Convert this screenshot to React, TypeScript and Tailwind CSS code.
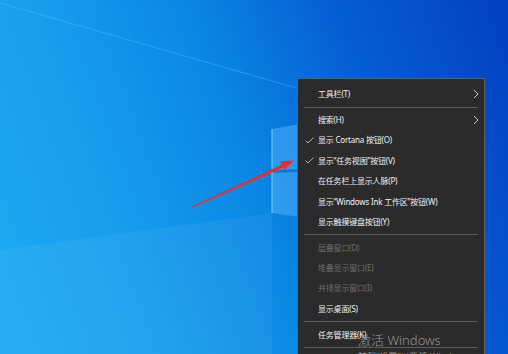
import React from 'react';

type Item =
  | { kind: 'row'; label: string; checked?: boolean; disabled?: boolean; submenu?: boolean }
  | { kind: 'sep' };

const items: Item[] = [
  { kind: 'row', label: '工具栏(T)', submenu: true },
  { kind: 'sep' },
  { kind: 'row', label: '搜索(H)', submenu: true },
  { kind: 'row', label: '显示 Cortana 按钮(O)', checked: true },
  { kind: 'row', label: '显示“任务视图”按钮(V)', checked: true },
  { kind: 'row', label: '在任务栏上显示人脉(P)' },
  { kind: 'row', label: '显示“Windows Ink 工作区”按钮(W)' },
  { kind: 'row', label: '显示触摸键盘按钮(Y)' },
  { kind: 'sep' },
  { kind: 'row', label: '层叠窗口(D)', disabled: true },
  { kind: 'row', label: '堆叠显示窗口(E)', disabled: true },
  { kind: 'row', label: '并排显示窗口(I)', disabled: true },
  { kind: 'row', label: '显示桌面(S)' },
  { kind: 'sep' },
  { kind: 'row', label: '任务管理器(K)' },
  { kind: 'sep' },
  { kind: 'row', label: '锁定所有任务栏(L)' },
];

function Check() {
  return (
    <svg width="9" height="7" viewBox="0 0 9 7" className="shrink-0">
      <path d="M0.5 3.6 L3 6 L8.5 0.6" fill="none" stroke="#bdbdbd" strokeWidth="0.9" />
    </svg>
  );
}

function Chevron() {
  return (
    <svg width="6" height="10" viewBox="0 0 6 10">
      <path d="M1 1 L5 5 L1 9" fill="none" stroke="#c9c9c9" strokeWidth="1" />
    </svg>
  );
}

function Wallpaper() {
  // wallpaper light beams + the windows logo pane peeking out from behind the menu
  return (
    <svg className="absolute inset-0" width="508" height="354" viewBox="0 0 508 354">
      <polygon points="0,250 272,213 272,354 0,354" fill="#ffffff" opacity="0.05" />
      <line x1="0" y1="3" x2="300" y2="89" stroke="#5cc4ff" strokeWidth="0.8" opacity="0.5" />
      <polygon points="272,129 300,124 300,169 272,170" fill="#5bbcff" opacity="0.45" />
      <polygon points="272,173 300,172 300,217 272,213" fill="#5bbcff" opacity="0.45" />
      <line x1="272" y1="129" x2="272" y2="213" stroke="#8be4ff" strokeWidth="1" opacity="0.8" />
      <line x1="272" y1="171.5" x2="300" y2="170.5" stroke="#1270d4" strokeWidth="1.5" opacity="0.7" />
    </svg>
  );
}

function Arrow() {
  return (
    <svg className="absolute inset-0 pointer-events-none" width="508" height="354" viewBox="0 0 508 354">
      <polygon points="191.5,206.6 192.5,207.6 283.6,167.2 282.4,164.2" fill="#e8302b" />
      <polygon points="294,160.5 280.1,161.2 284.3,169.8" fill="#e8302b" />
    </svg>
  );
}

export default function App() {
  return (
    <div
      className="relative w-[508px] h-[354px] overflow-hidden bg-[linear-gradient(250deg,#0340c2_0%,#065ed3_28%,#0a86e3_50%,#189fee_76%,#1eaaf3_100%)]"
      style={{ fontFamily: '"Noto Sans", "Noto Sans CJK SC", sans-serif' }}
    >
      <Wallpaper />
      <Arrow />

      <div className="absolute left-[297px] top-[78px] w-[188px] h-[290px] bg-[#2b2b2b] border border-[#616161] pt-[5px] text-[8px] leading-none">
        {items.map((it, i) =>
          it.kind === 'sep' ? (
            <div key={i} className="h-[5.4px] flex items-center px-[6px]">
              <div className="h-px w-full bg-[#5a5a5a]" />
            </div>
          ) : (
            <div key={i} className="h-[20.4px] flex items-center">
              <div className="w-[20px] flex justify-center pl-[2px]">{it.checked && <Check />}</div>
              <span className={`flex-1 tracking-[-0.2px] ${it.disabled ? 'text-[#6b6b6b]' : 'text-[#f2f2f2]'}`}>
                {it.label}
              </span>
              <div className="w-[14px] flex justify-center pr-[2px]">{it.submenu && <Chevron />}</div>
            </div>
          )
        )}
      </div>

      <div className="absolute left-[358px] top-[334px] text-[#a3a3a3]/90 leading-none pointer-events-none">
        <div className="text-[13px] font-light">激活 Windows</div>
        <div className="text-[9px] mt-[5px]">转到“设置”以激活 Windows。</div>
      </div>
    </div>
  );
}
